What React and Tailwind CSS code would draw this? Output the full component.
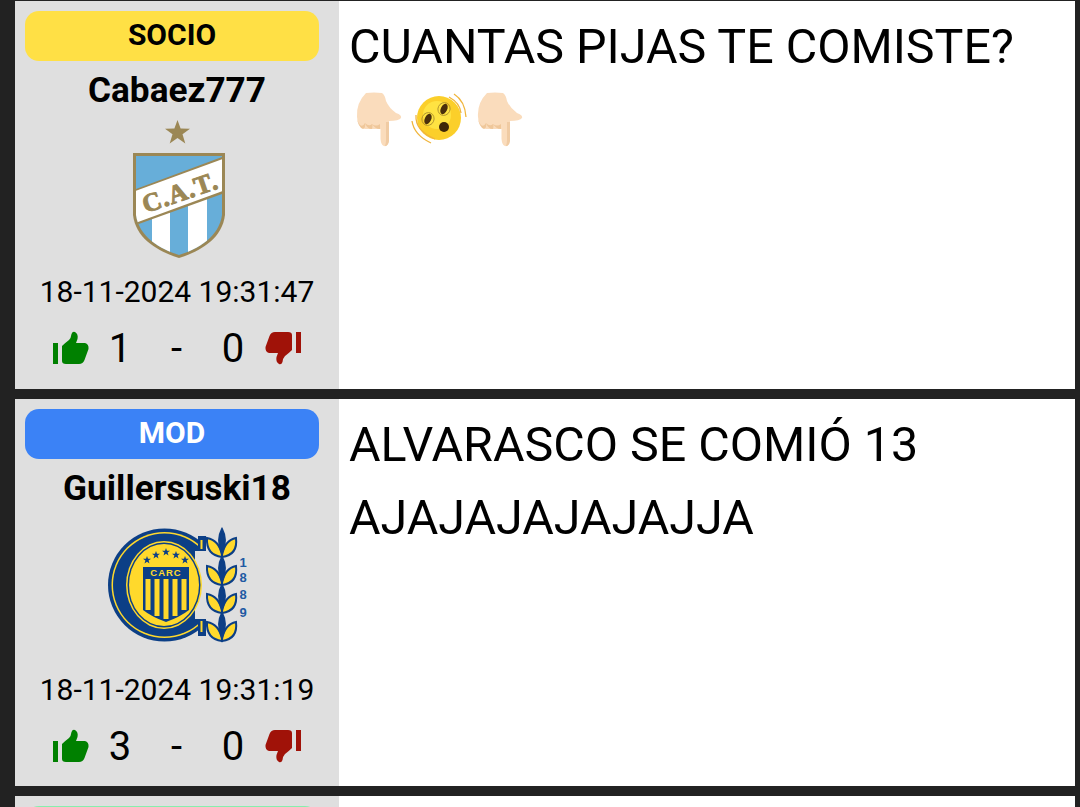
import React from 'react';

// Vote icons share one path, the down one is just turned over
const Thumb = ({ down = false }) => (
    <svg width="37" height="34" viewBox="0 0 37 34" className="shrink-0">
        <g transform={down ? 'rotate(180 18.5 17)' : undefined} fill={down ? '#a01208' : '#008000'}>
            <rect x="1" y="12" width="5" height="21" />
            <path d="M10 15 Q13 12 17 9 Q19 7 19.5 3 Q20.5 0 23 1 Q26.5 3 25.5 8 L24 12 H33 Q37 13 36.5 18 L32.5 29 Q31 33 27 33 H14 Q10 33 10 30 Z" />
        </g>
    </svg>
);

const Hand = ({ x }) => (
    <g transform={`translate(${x} 0)`}>
        <path d="M27 8 Q35 7 43 8 Q46 10 47 16 Q50 23 57 28 Q63 30 62 33 Q60 36 50 36 V56 Q49 62 45 61 Q42 60 41.5 54 V44 H26 Q19 42 18 32 Q17 18 27 8 Z" fill="#fadcbc" />
        <path d="M18 33 Q19 42 24 44 Q27 43 26 38 Q24 42 21 40 Q19 38 18 33 Z M26 38 Q28 44 33 44 Q34 40 33 39 Q30 42 26 38 Z M33 39 Q36 44 41 44 V39 Q37 42 33 39 Z" fill="#efc79a" />
        <path d="M47 37 H50 V56 Q49 61 46 61 Q47 58 47 55 Z" fill="#f0cba3" />
    </g>
);

const DizzyFace = () => (
    <g>
        <circle cx="100" cy="33" r="22" fill="#fbcf2a" />
        <circle cx="98" cy="30" r="14" fill="#ffe342" />
        <g fill="none" stroke="#a98b2c" strokeWidth="0.8">
            <ellipse cx="89" cy="34" rx="6" ry="6.5" transform="rotate(25 89 34)" />
            <ellipse cx="105" cy="24" rx="6" ry="6.5" transform="rotate(25 105 24)" />
        </g>
        <ellipse cx="89" cy="34" rx="3.2" ry="5.5" transform="rotate(25 89 34)" fill="#4a2f0c" />
        <ellipse cx="105" cy="24" rx="3.2" ry="5.5" transform="rotate(25 105 24)" fill="#4a2f0c" />
        <circle cx="105" cy="42" r="5" fill="#3e2708" />
        <path d="M73 36 Q75 50 92 58 M77 30 Q76 46 96 54 M115 9 Q126 16 127 32 M110 12 Q121 18 122 28" fill="none" stroke="#f0b53c" strokeWidth="1.3" />
    </g>
);

const CrestCat = () => (
    <svg width="154" height="155" viewBox="0 0 154 155">
        <defs>
            <clipPath id="shieldCat">
                <path d="M36 46 H122 V105 C119 127 98 139 79 145 C60 139 39 127 36 105 Z" />
            </clipPath>
        </defs>
        <polygon points="77.5,10 80.6,18.5 90,18.7 82.5,24.3 85.3,33.5 77.5,28 69.7,33.5 72.5,24.3 65,18.7 74.4,18.5" fill="#9b8755" />
        <path d="M33 43 H125 V105 C122 130 98 142 79 148 C60 142 36 130 33 105 Z" fill="#9b8755" />
        <g clipPath="url(#shieldCat)">
            <rect x="33" y="43" width="92" height="105" fill="#67aed9" />
            <rect x="52" y="95" width="18" height="55" fill="#fff" />
            <rect x="88" y="85" width="19" height="65" fill="#fff" />
            <polygon points="33,80 125,46 125,83 33,116" fill="#9b8755" />
            <polygon points="35,81 123,49 123,81 35,113" fill="#fff" />
        </g>
        <text x="80" y="91" transform="rotate(-19 80 82)" textAnchor="middle" fontSize="26" fontWeight="700" letterSpacing="1" stroke="#9b8755" strokeWidth="1" fontFamily="'Liberation Serif', serif" fill="#9b8755">C.A.T.</text>
    </svg>
);

// one laurel pair, stacked four times
const Laurel = ({ y }) => (
    <g transform={`translate(127 ${y})`} stroke="#0c3f86" strokeWidth="2">
        <path d="M0 14 Q-16 12 -15 -5 Q-3 -3 0 12 Z" fill="#ffd92c" />
        <path d="M0 14 Q16 12 14 -5 Q3 -3 0 12 Z" fill="#ffd92c" />
        <path d="M0 10 Q-6 -3 0 -14 Q6 -3 0 10 Z" fill="#0c3f86" />
    </g>
);

const Star = ({ x, y }) => (
    <polygon transform={`translate(${x} ${y})`} points="0,-4 1,-1.2 4,-1.2 1.6,0.6 2.5,3.5 0,1.8 -2.5,3.5 -1.6,0.6 -4,-1.2 -1,-1.2" fill="#0c3f86" />
);

const CrestCarc = () => (
    <svg width="164" height="155" viewBox="0 -12 164 155">
        <defs>
            <clipPath id="carcOpen">
                <path d="M0 -5 H111 V31 H100 V99 H111 V135 H0 Z" />
            </clipPath>
        </defs>
        <g clipPath="url(#carcOpen)">
            <circle cx="69.5" cy="65" r="56.5" fill="#0c3f86" />
            <circle cx="69.5" cy="65" r="53" fill="#ffd92c" />
            <circle cx="69.5" cy="65" r="51.5" fill="#0c3f86" />
        </g>
        <rect x="103" y="16" width="8" height="15" fill="#0c3f86" />
        <rect x="103" y="99" width="8" height="17" fill="#0c3f86" />
        <rect x="105.5" y="20" width="2" height="9" fill="#ffd92c" />
        <rect x="105.5" y="101" width="2" height="11" fill="#ffd92c" />
        <ellipse cx="69" cy="65" rx="38" ry="44" fill="#ffd92c" />
        <ellipse cx="69" cy="65" rx="36.5" ry="42.5" fill="#0c3f86" />
        <ellipse cx="69" cy="65" rx="35" ry="41" fill="#ffd92c" />
        <Star x={52} y={40} />
        <Star x={61} y={35} />
        <Star x={71} y={32} />
        <Star x={81} y={35} />
        <Star x={90} y={40} />
        <path d="M48 47 H94 V90 Q85 97 71 102 Q57 97 48 90 Z" fill="#0c3f86" />
        <text x="71" y="56" textAnchor="middle" fontSize="9.5" fontWeight="700" letterSpacing="1" fill="#ffd92c" fontFamily="'Liberation Sans', sans-serif">CARC</text>
        <g fill="#ffd92c">
            <rect x="50.5" y="59" width="5" height="31" />
            <rect x="59.5" y="59" width="5" height="37" />
            <rect x="68.5" y="59" width="5" height="40" />
            <rect x="77.5" y="59" width="5" height="37" />
            <rect x="86.5" y="59" width="5" height="31" />
        </g>
        <Laurel y={23} />
        <Laurel y={51} />
        <Laurel y={79} />
        <Laurel y={107} />
        <g fontSize="13" fontWeight="700" fill="#1f5aa3" fontFamily="'Liberation Sans', sans-serif" textAnchor="middle">
            <text x="148" y="47">1</text>
            <text x="148" y="62">8</text>
            <text x="148" y="79">8</text>
            <text x="148" y="97">9</text>
        </g>
    </svg>
);

const Post = ({ role, roleClass, roleText, name, crest, date, up, down, heightClass, children }) => (
    <div className={`flex bg-white ${heightClass}`}>
        <div className="w-[324px] shrink-0 bg-[#dfdfdf] p-[10px] flex flex-col items-center">
            <div className={`w-[294px] self-start h-[50px] pb-[3px] rounded-[14px] flex items-center justify-center text-[30px] font-bold ${roleClass} ${roleText}`}>
                {role}
            </div>
            <div className="mt-[9px] h-[40px] leading-[40px] text-[35.2px] font-bold text-black whitespace-nowrap">{name}</div>
            <div className="h-[155px]">{crest}</div>
            <div className="mt-[10px] h-[34px] leading-[34px] text-[30px] text-black whitespace-nowrap">{date}</div>
            <div className="mt-[18px] h-[44px] flex items-center justify-center text-[40px] text-black">
                <span className="-mt-[2px]"><Thumb /></span>
                <span className="w-[56px] ml-[3px] text-center">{up}</span>
                <span className="w-[57px] text-center">-</span>
                <span className="w-[56px] text-center">{down}</span>
                <span className="ml-[4px] -mt-[2px]"><Thumb down /></span>
            </div>
        </div>
        <div className="flex-1 min-w-0 px-[10px] pt-[9px] text-[48.4px] leading-[73px] text-black">
            {children}
        </div>
    </div>
);

export default function App() {
    return (
        <div className="h-[807px] overflow-hidden bg-[#222222] pt-px pl-[15px] pr-[5px] flex flex-col gap-[10px] font-['Roboto',sans-serif]">
            <Post
                role="SOCIO"
                roleClass="bg-[#ffe045]"
                roleText="text-black"
                name="Cabaez777"
                crest={<CrestCat />}
                date="18-11-2024 19:31:47"
                up="1"
                down="0"
                heightClass="h-[388px] shrink-0"
            >
                <div>CUANTAS PIJAS TE COMISTE?</div>
                <svg width="195" height="70" viewBox="0 0 195 70" className="block -ml-[10px] mt-[2px]" role="img" aria-label="emoji">
                    <Hand x={0} />
                    <DizzyFace />
                    <Hand x={121} />
                </svg>
            </Post>
            <Post
                role="MOD"
                roleClass="bg-[#3b82f6]"
                roleText="text-white"
                name="Guillersuski18"
                crest={<CrestCarc />}
                date="18-11-2024 19:31:19"
                up="3"
                down="0"
                heightClass="h-[387px] shrink-0"
            >
                ALVARASCO SE COMIÓ 13 AJAJAJAJAJAJJA
            </Post>
            <div className="flex bg-white h-[200px] shrink-0">
                <div className="w-[324px] shrink-0 bg-[#dfdfdf] p-[10px]">
                    <div className="w-[294px] h-[50px] rounded-[14px] bg-[#86efac]" />
                </div>
            </div>
        </div>
    );
}
